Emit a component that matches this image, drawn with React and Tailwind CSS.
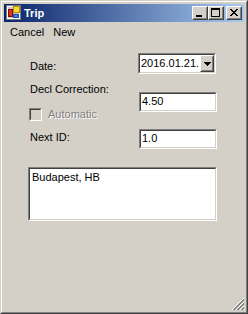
import React from "react";

function Sunken({ className = "", innerClassName = "", children }) {
  return (
    <div className={"border border-t-[#808080] border-l-[#808080] border-b-white border-r-white " + className}>
      <div className={"h-full border border-t-[#404040] border-l-[#404040] border-b-[#d4d0c8] border-r-[#d4d0c8] " + innerClassName}>
        {children}
      </div>
    </div>
  );
}

function Raised({ className = "", innerClassName = "", children }) {
  return (
    <div className={"border border-t-white border-l-white border-b-[#404040] border-r-[#404040] " + className}>
      <div className={"h-full border border-t-[#d4d0c8] border-l-[#d4d0c8] border-b-[#808080] border-r-[#808080] bg-[#d4d0c8] " + innerClassName}>
        {children}
      </div>
    </div>
  );
}

function AppIcon() {
  return (
    <svg width="16" height="16" viewBox="0 0 16 16" shapeRendering="crispEdges">
      <rect x="0.5" y="0.5" width="14" height="14" fill="#e8e8e8" stroke="#7a7a7a" />
      <rect x="1.5" y="1.5" width="12" height="12" fill="#c8c8d0" stroke="#ffffff" />
      <rect x="2.5" y="4.5" width="4" height="7" fill="#e03020" stroke="#801010" />
      <rect x="7.5" y="1.5" width="6" height="6" fill="#f8d838" stroke="#b88a00" />
      <rect x="7.5" y="9.5" width="5" height="3" fill="#3c7ee8" stroke="#1c4aa0" />
    </svg>
  );
}

function CloseGlyph() {
  const r = [];
  for (let i = 0; i < 7; i++) {
    r.push(<rect key={"a" + i} x={2 + i} y={1 + i} width="2" height="1" fill="#000" />);
    r.push(<rect key={"b" + i} x={8 - i} y={1 + i} width="2" height="1" fill="#000" />);
  }
  return (
    <svg width="12" height="10" viewBox="0 0 12 10" shapeRendering="crispEdges">
      {r}
    </svg>
  );
}

function Grip() {
  const px = [];
  for (let x = 0; x < 12; x++) {
    for (let y = 0; y < 12; y++) {
      const s = x + y;
      let c = null;
      if (s === 11 || s === 15 || s === 19) c = "#ffffff";
      else if (s === 12 || s === 13 || s === 16 || s === 17 || s === 20 || s === 21) c = "#808080";
      if (c) px.push(<rect key={x + "-" + y} x={x} y={y} width="1" height="1" fill={c} />);
    }
  }
  return (
    <svg width="12" height="12" viewBox="0 0 12 12" shapeRendering="crispEdges">
      {px}
    </svg>
  );
}

export default function App() {
  return (
    <div className="relative w-[248px] h-[314px] bg-[#d4d0c8] border border-t-[#d4d0c8] border-l-[#d4d0c8] border-b-[#404040] border-r-[#404040] font-['Liberation_Sans',Arial,sans-serif] text-[11px] leading-[13px] text-black">
      <div className="h-full border border-t-white border-l-white border-b-[#808080] border-r-[#808080] p-[2px] flex flex-col">
        {/* Title bar */}
        <div className="h-[18px] flex items-center bg-linear-to-r/srgb from-[#0a246a] to-[#a6caf0]">
          <div className="ml-[2px] flex">
            <AppIcon />
          </div>
          <span className="ml-[2px] font-bold text-white">Trip</span>
          <div className="ml-auto mr-[2px] flex">
            <Raised className="w-[16px] h-[14px]">
              <svg width="12" height="10" viewBox="0 0 12 10" shapeRendering="crispEdges">
                <rect x="2" y="7" width="6" height="2" fill="#000" />
              </svg>
            </Raised>
            <Raised className="w-[16px] h-[14px]">
              <svg width="12" height="10" viewBox="0 0 12 10" shapeRendering="crispEdges">
                <rect x="1" y="0" width="9" height="2" fill="#000" />
                <rect x="1" y="0" width="1" height="9" fill="#000" />
                <rect x="9" y="0" width="1" height="9" fill="#000" />
                <rect x="1" y="8" width="9" height="1" fill="#000" />
              </svg>
            </Raised>
            <Raised className="ml-[2px] w-[16px] h-[14px]">
              <CloseGlyph />
            </Raised>
          </div>
        </div>

        {/* Menu bar */}
        <div className="mt-[1px] h-[19px] flex items-center">
          <span className="ml-[6px]">Cancel</span>
          <span className="ml-[9px]">New</span>
        </div>

        {/* Content */}
        <div className="flex flex-col pl-[24px]">
          {/* Date row */}
          <div className="mt-[11px] flex">
            <div className="w-[110px] pl-[2px] pt-[7px]">Date:</div>
            <Sunken className="w-[78px] h-[21px]" innerClassName="bg-white flex">
              <div className="flex-1 overflow-hidden whitespace-nowrap pl-[1px] pt-[2px]">2016.01.21.</div>
              <Raised className="w-[14px] h-full" innerClassName="flex items-center justify-center">
                <svg width="7" height="4" viewBox="0 0 7 4" shapeRendering="crispEdges">
                  <rect x="0" y="0" width="7" height="1" fill="#000" />
                  <rect x="1" y="1" width="5" height="1" fill="#000" />
                  <rect x="2" y="2" width="3" height="1" fill="#000" />
                  <rect x="3" y="3" width="1" height="1" fill="#000" />
                </svg>
              </Raised>
            </Sunken>
          </div>

          {/* Decl correction row */}
          <div className="mt-[9px] flex">
            <div className="w-[111px] flex flex-col">
              <div className="pl-[2px]">Decl Correction:</div>
              <div className="mt-[12px] pl-[1px] flex items-center h-[13px]">
                <Sunken className="w-[13px] h-[13px]" innerClassName="bg-[#d4d0c8]" />
                <span className="ml-[6px] text-[#808080] [text-shadow:1px_1px_0_#ffffff]">Automatic</span>
              </div>
            </div>
            <Sunken className="mt-[9px] w-[78px] h-[20px]" innerClassName="bg-white pl-[1px] pt-[1px]">
              4.50
            </Sunken>
          </div>

          {/* Next ID row */}
          <div className="mt-[8px] flex">
            <div className="w-[111px] pl-[2px] pt-[2px]">Next ID:</div>
            <Sunken className="w-[78px] h-[20px]" innerClassName="bg-white pl-[1px] pt-[1px]">
              1.0
            </Sunken>
          </div>

          {/* Multiline */}
          <Sunken className="mt-[18px] w-[189px] h-[54px]" innerClassName="bg-white pl-[2px] pt-[2px]">
            Budapest, HB
          </Sunken>
        </div>
      </div>
      <div className="absolute right-[3px] bottom-[3px] flex">
        <Grip />
      </div>
    </div>
  );
}
